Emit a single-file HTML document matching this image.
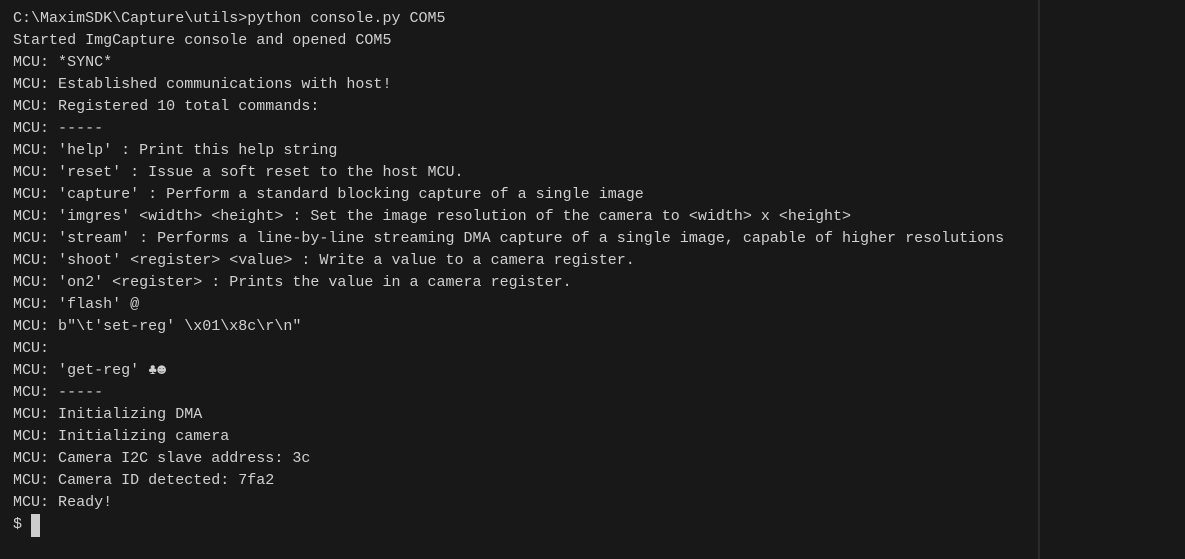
<!DOCTYPE html>
<html><head><meta charset="utf-8"><style>
html,body{margin:0;padding:0;width:1185px;height:559px;background:#181818;overflow:hidden}
#t{position:absolute;left:13px;top:7px;font-family:"Liberation Mono",monospace;font-size:15.03px;line-height:22px;color:#d0d0d0;white-space:pre}
#d{position:absolute;left:1038px;top:0;width:2px;height:559px;background:#2a2a2a}
#c{position:absolute;left:31px;top:514px;width:9px;height:23px;background:#cccccc}
</style></head><body>
<div id="t">C:\MaximSDK\Capture\utils&gt;python console.py COM5
Started ImgCapture console and opened COM5
MCU: *SYNC*
MCU: Established communications with host!
MCU: Registered 10 total commands:
MCU: -----
MCU: 'help' : Print this help string
MCU: 'reset' : Issue a soft reset to the host MCU.
MCU: 'capture' : Perform a standard blocking capture of a single image
MCU: 'imgres' &lt;width&gt; &lt;height&gt; : Set the image resolution of the camera to &lt;width&gt; x &lt;height&gt;
MCU: 'stream' : Performs a line-by-line streaming DMA capture of a single image, capable of higher resolutions
MCU: 'shoot' &lt;register&gt; &lt;value&gt; : Write a value to a camera register.
MCU: 'on2' &lt;register&gt; : Prints the value in a camera register.
MCU: 'flash' @
MCU: b"\t'set-reg' \x01\x8c\r\n"
MCU:
MCU: 'get-reg' ♣☻
MCU: -----
MCU: Initializing DMA
MCU: Initializing camera
MCU: Camera I2C slave address: 3c
MCU: Camera ID detected: 7fa2
MCU: Ready!
$</div>
<div id="c"></div>
<div id="d"></div>
</body></html>
